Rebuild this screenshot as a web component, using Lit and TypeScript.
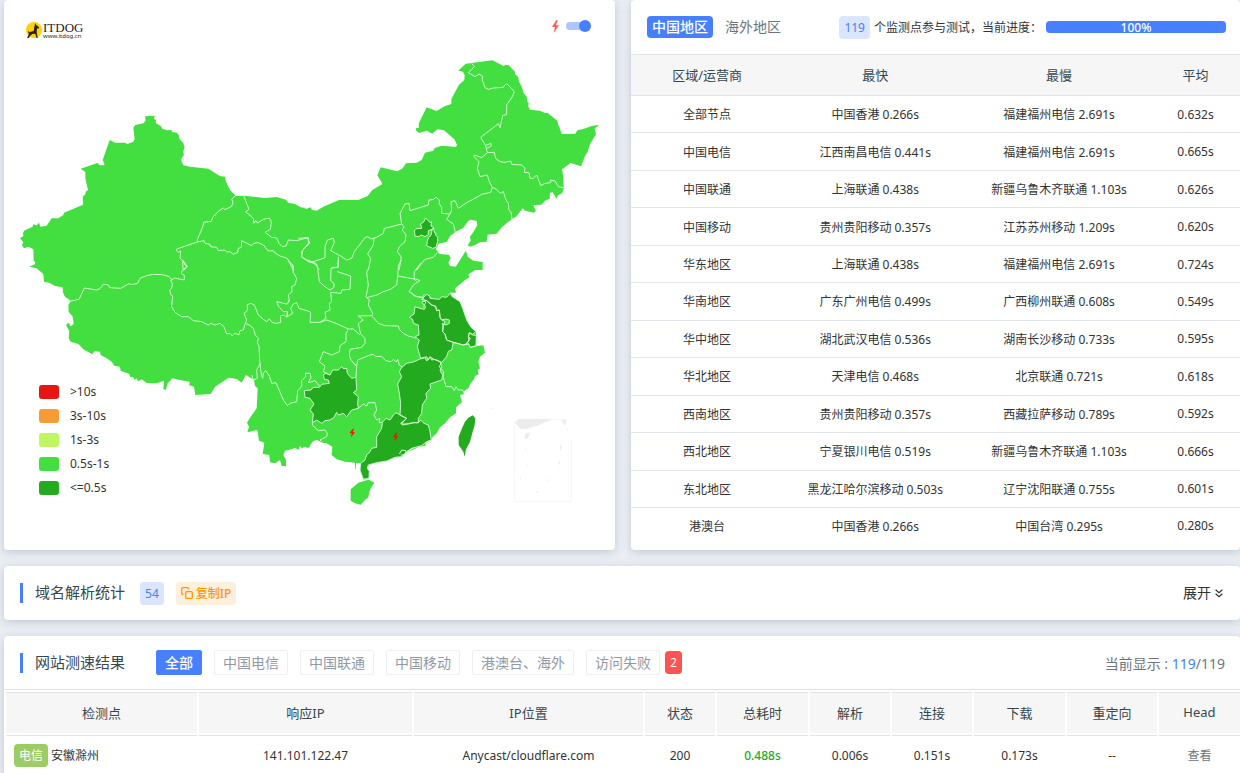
import { LitElement, html, svg, css } from "lit";
import { customElement, property, state } from "lit/decorators.js";
import { classMap } from "lit/directives/class-map.js";

type Run = [number, number, string];

/* A line is traced as runs of points; every run has its own origin on the map sheet. */
const line = (...runs: Run[]) =>
  "M" +
  runs
    .map(([dx, dy, pts]) =>
      pts
        .trim()
        .split(/\s+/)
        .map((p) => {
          const [x, y] = p.split(",").map(Number);
          return `${x + dx} ${y + dy}`;
        })
        .join("L")
    )
    .join("L");

const area = (...runs: Run[]) => line(...runs) + "Z";
const W = (p: string): Run => [0, 0, p];
const SW = (p: string): Run => [0, 780, p];
const NE = (p: string): Run => [900, 0, p];
const S = (p: string): Run => [690, 780, p];
const E = (p: string): Run => [1200, 720, p];

const MAINLAND = area(
  W(`60,715 70,708 69,700 72,692 98,680 99,673 110,676 117,668 121,680 140,677 155,655 175,655 190,645 192,638 249,614 248,590
  256,583 257,575 264,570 256,535 256,516 242,506 292,489 300,496 314,495 308,480 329,420 345,428 375,428 382,432 400,425
  404,416 400,383 406,375 430,370 437,362 435,349 464,347 462,357 468,360 467,369 482,378 487,386 500,391 514,390 516,396
  530,398 536,404 538,416 550,430 554,442 549,456 552,464 544,476 545,486 550,496 570,500 625,506 659,528 675,530 677,542
  690,570 705,585 706,588 733,587 795,594 830,591 858,599 865,608 885,612 905,623 918,624`),
  NE(`0,622 20,626 33,622 35,629 50,632 70,620 117,600 175,600 203,588 217,570 246,553 245,547 232,526 242,502 292,514 308,505
  318,490 350,488 365,480 375,458 400,452 404,444 425,437 445,439 468,441 471,434 463,418 432,391 412,388 397,401 380,392
  357,399 347,390 349,384 356,384 357,368 380,322 410,333 435,318 454,312 454,298 462,282 477,254 493,240 494,226 489,215
  475,212 497,191 577,181 612,199 615,194 627,196 633,203 645,215 645,222 655,232 657,244 668,268 670,278 680,290 682,306
  686,308 685,320 690,329 720,332 735,339 742,338 772,362 775,375 780,387 785,402 826,401 832,391 850,387 875,378 897,374
  884,386 888,403 870,432 863,455 855,468 843,499 812,489 786,508 790,530 791,563 787,578 772,588 770,597 758,577 750,578
  749,596 735,602 724,614 700,615 707,632 702,638 675,632 668,625 648,650 636,657 605,682 590,701 563,704 560,725 540,727
  525,735 510,740 503,736 512,722 510,710 520,696 532,676 530,663 513,659 505,662 490,683 465,697 450,708 440,726 420,730
  415,733 408,748 418,762 446,764 452,775 445,788 450,798 467,800 480,780 498,752 503,770 520,782 548,786`),
  E(`248,90 225,90 218,95 205,103 208,112 195,120 180,133 165,145 168,158 152,158 154,168 180,185 188,205 200,240 213,262
  228,275 228,318 250,316 255,338 240,350 235,365 240,385 233,390 236,403 225,408 222,418 212,430 205,445 190,455 192,462
  180,465 186,486 168,502 168,520 150,532 135,550 120,562 110,580 97,592 95,600 80,605 75,618 45,622 25,635`),
  S(`575,557 545,565 530,575 515,590 495,592 470,603 440,608 415,615 412,625 418,634 417,655 400,658 390,630 392,610 378,610
  377,628 375,628 375,608 345,605 320,598 305,585 307,560 290,550 275,548 262,540 250,543 240,556`),
  SW(`930,560 923,564 915,560 905,565 900,558 895,570 885,563 875,568 855,572 850,585 858,600 858,619 845,618 840,600 825,610
  810,607 808,585 788,582 793,548 777,542 772,510 742,517 747,500 741,488 752,470 770,445 773,385 765,378 762,360 738,345
  725,368 710,357 686,353 645,380 632,402 586,405 582,380 568,376 569,365 540,360 518,355 503,370 497,391 490,386 492,362
  470,370 440,369 425,358 415,364 410,355 404,360 400,352 390,350 388,342 362,332 360,320 343,317 335,305 320,295 302,285
  300,275 283,274 277,283 250,268 235,252 212,245 206,235 208,212 198,195 205,188 212,199 221,192 218,170 206,155 205,135
  213,123 195,110 189,98 188,82 165,78 147,68 132,65 130,42 110,25 88,20 105,12`),
  W(`112,805 90,800 104,795 106,787 101,782 100,748 85,740 72,745 66,735 70,727`)
);

const HAINAN = area(S("362,688 385,668 400,664 412,660 418,660 433,668 425,680 418,695 415,712 405,720 392,734 375,730 362,722"));

const DARK = [
  area(NE("343,692 350,686 365,685 362,672 372,665 376,654 385,662 390,668 395,665 393,678 401,682 396,688 385,692 385,704 375,710 365,705 355,710 345,708")),
  area(NE("401,684 403,698 408,700 407,706 413,712 413,724 408,742 398,745 380,737 382,724 386,712 393,706 396,690")),
  area(S(`223,392 243,390 250,382 268,382 275,373 298,370 295,360 283,358 280,345 288,340 300,345 308,330 325,330 335,320
  340,326 350,325 352,340 365,355 378,352 380,390 370,398 385,410 383,430 385,445 365,450 350,470 340,460 325,465 320,457
  312,472 300,480 285,482 275,490 260,480 247,488 250,462 240,450 252,432 240,415 225,412`)),
  area(S(`515,322 530,310 550,306 570,297 585,293 590,303 600,291 612,298 630,305 635,320 630,332 638,345 635,360 600,372 602,385
  588,400 590,415 577,435 575,460 565,475 565,488 550,488 530,492 518,495 512,490 530,475 510,465 512,430 508,400 503,372
  515,350 508,335`)),
  area(S(`457,487 468,475 480,480 490,465 498,458 510,465 530,475 514,492 535,492 550,488 565,488 572,480 582,490 595,495 600,515
  604,540 590,545 575,557 545,565 530,575 515,590 495,592 470,603 440,608 415,615 412,625 418,634 417,655 400,658 390,630
  392,610 405,600 410,585 420,575 425,565 440,562 440,530 455,505`)),
  area(E(`45,200 60,205 73,208 77,200 65,186 80,182 95,195 107,199 110,212 118,210 120,232 125,240 135,245 128,262 128,275 135,282
  140,300 160,307 155,330 145,334 140,350 125,367 105,358 95,360 90,350 85,360 80,350 62,355 52,320 58,300 45,290 57,285
  55,255 40,250 38,238 28,232 42,222`)),
  area(E(`65,178 80,163 90,168 90,175 118,178 125,170 140,172 152,158 154,168 180,185 188,205 200,240 213,262 228,275 218,283
  208,278 205,292 207,300 198,312 190,315 160,307 140,300 135,282 128,275 130,262 127,250 138,255 148,250 148,240 138,237
  125,240 120,232 118,210 110,212 107,199 95,195 80,182`)),
  area(E("208,278 218,285 229,286 228,318 212,322 203,308 211,295 205,290")),
];

const TAIWAN = area(S("728,466 736,475 734,495 728,515 720,545 708,568 704,590 700,575 686,555 686,530 698,500 705,485 715,473"));
const HONGKONG = line(S("508,582 515,570 528,572 526,585 512,585"));

const BORDERS = [
  line(
    W(`706,588 695,597 699,607 695,619 675,629 670,624 655,634 638,652 634,664 611,667 608,682 592,718 592,726 530,747 530,753
    536,757 542,753 540,773 550,785 555,795 562,800 549,808`),
    SW("548,0 561,18 555,28 546,32 544,40 553,46 553,60 523,54 512,62")
  ),
  line(SW(`516,60 508,50 487,44 460,43 440,47 420,55 413,70 400,73 385,72 362,85 329,83 324,74 310,73 300,86 290,90 253,84 237,118
    213,123`)),
  line(SW(`512,60 517,72 515,85 509,90 513,105 518,108 515,140 525,157 545,170 565,170 580,182 605,185 625,195 632,190 645,195
    660,190 672,200 680,222 690,220 697,228 703,220 717,224 720,212 730,210 736,190 740,180 732,160 742,152 742,134 753,130
    763,135 775,165 790,178 800,185 808,176 815,186 825,190 842,188 842,167 852,165 860,172 862,155 850,155 835,138 830,125
    850,130 862,132 868,120`)),
  line(SW("736,190 748,195 760,205 766,225 775,235 772,248 777,258 779,300 784,345 788,355 790,338 797,332 808,348 815,370 828,368 850,420 862,437 870,430 890,425 893,392 905,380 905,362 917,350 916,340 930,340")),
  line(SW("780,312 770,330 772,355 760,360 755,345")),
  line(
    W(`592,726 612,722 615,730 630,733 632,740 650,742 655,752 675,750 680,756 690,755 700,763 713,757 715,745 724,742 725,722
    755,737 760,730 775,728 790,735 805,753 820,752 825,759 840,768 862,775 868,785 880,797 880,810`),
    SW("865,2 877,15 880,38 890,55 885,75 875,80 876,95 865,105 868,120 862,132")
  ),
  line(SW("862,155 862,170 878,160 872,145 880,132 890,128 897,145 930,155"), S("242,160 240,187 270,187")),
  line(
    W(`731,588 747,628 737,635 760,655 762,670 768,662 772,669 790,658 808,654 814,665 811,688 795,697 815,712 830,714 837,730
    847,740 858,738 865,720 890,722 905,718 923,713 929,730 908,750 905,770 928,787 940,788`)
  ),
  line(
    NE(`-5,715 25,713 25,730 5,755 5,772 35,787 75,773 75,740 82,720 100,715 103,728 92,752 120,767 140,780 155,775 163,755
    195,713 203,710 215,717 230,712 250,700 253,685 275,680 305,672 300,640 315,612 327,610 330,632 362,622 385,615 387,600
    400,598 408,592 418,600 418,612 425,622 425,640 450,642 455,630 453,605 465,602 475,625 500,608 530,592 545,583 572,577
    577,562 568,545 562,525 540,530 532,505 537,485 522,470 523,465 545,473 562,458 556,435 542,412 595,371 600,383 608,347
    620,343 620,315 637,290 643,275 622,252 615,254 610,262 580,264 565,268 555,263 547,240 547,228 537,222 525,230 505,218
    523,200 515,190`)
  ),
  line(NE("556,437 573,430 574,438 560,445")),
  line(NE("562,458 583,457 587,475 600,485 615,487 632,483 635,493 665,495 675,505 673,517 687,518 690,535 700,535 710,525 722,557 735,550 752,548 752,540 765,543 775,560 790,563")),
  line(NE("577,562 590,568 600,580 610,575 618,600 625,610 627,630 633,637 636,657")),
  line(NE("450,642 440,658 460,672 466,697")),
  line(NE("222,712 220,735 203,762 212,775 205,810"), S("412,30 410,40 415,75 408,110 418,120 415,135 428,160 425,167 385,168 400,180 385,190 392,222 405,235 405,250 395,262 360,268 358,285 362,298 380,320")),
  line(NE("305,672 312,680 307,690 318,705 315,725 298,740 292,755 303,770 303,782 297,795 297,810"), S("513,0 505,20 503,50 500,75 482,88 460,95 440,105 410,113")),
  line(NE("412,758 400,772 375,778 365,790 350,810"), S("572,10 553,35 552,55 570,62 550,75 537,95 560,110 578,112 583,103")),
  line(S("503,48 525,52 552,57 560,64")),
  line(S("540,95 553,108 578,113 587,128 580,142")),
  line(S("425,167 445,190 465,197 505,198 508,208 520,220 535,228 550,232 557,235")),
  line(S("380,320 383,300 420,285 430,283 437,290 455,289 467,302 483,305 490,298 498,306 503,298 508,315 518,322")),
  line(S("235,0 260,12 265,40 268,65 285,80 300,90 312,82 312,70 302,62 303,25 322,22 325,0")),
  line(S("322,35 362,48 360,88 335,90 333,100 302,97 305,125 298,130 300,150 285,157 288,175 270,187 290,180 318,190 355,207 370,207 390,225")),
  line(NE("115,770 115,802 95,802")),
  line(NE("35,787 50,795 57,810")),
  line(S("355,207 348,220 348,245 330,257 328,275 305,285 280,275 268,305 285,318 280,335 300,345")),
  line(S("362,298 380,320 378,352")),
  line(S("225,340 240,340 243,352 235,368 255,362 270,380")),
  line(S("385,445 400,432 410,438 415,428 435,428 440,450 432,465 440,480 450,475 447,488 457,487")),
  line(S("247,488 248,497 265,512 285,510 292,520 290,530 270,540 278,548")),
  line(E("160,307 190,315 205,312 212,322 228,318")),
  line(E("125,367 118,380 130,395 130,412 138,440 155,440 163,452 168,440 175,450 188,450 192,458")),
];

const BOLT = "M5 0L0 7h3.400L2 13L8 5.200H4.500L6.500 0z";

@customElement("speed-map")
class SpeedMap extends LitElement {
  @state() private bolts = true;

  static styles = css`
    :host { display: block; position: relative; }
    .sheet { display: block; width: 100%; height: auto; }
    .land { fill: #43df40; }
    .deep { fill: #24aa1e; }
    .border { fill: none; stroke: #d0f7cf; stroke-width: 3; stroke-linejoin: round; }
    .mark { fill: #f5120c; }
    .inset { fill: none; stroke: #f6f6f6; stroke-width: 3; }
    .isle { fill: #ececec; }
    .logo { position: absolute; left: 22px; top: 22px; display: flex; gap: 1px; align-items: flex-start; color: #2b2220; text-decoration: none; }
    .dog { width: 16px; height: 16px; }
    .name { display: block; font: 13px/12px "Liberation Serif", serif; }
    .site { display: block; font-size: 6px; line-height: 4px; }
    .switch { position: absolute; right: 24px; top: 19px; display: flex; align-items: center; gap: 7px; }
    .flash { width: 7px; height: 13px; fill: #ff5b5b; }
    .toggle { appearance: none; width: 25px; height: 14px; margin: 0; position: relative; cursor: pointer; }
    .toggle::before { content: ""; position: absolute; left: 0; right: 2px; top: 3px; height: 8px; border-radius: 4px; background: #cfd4da; }
    .toggle::after { content: ""; position: absolute; left: 0; top: 1px; width: 12px; height: 12px; border-radius: 50%; background: #98a0aa; }
    .toggle:checked::before { background: #adc6ff; }
    .toggle:checked::after { left: 13px; background: #4680ff; }
    .legend { position: absolute; left: 35px; bottom: 51px; margin: 0; padding: 0; list-style: none; }
    .level { display: flex; align-items: center; gap: 11px; height: 24px; font-size: 12px; color: #333; }
    .level i { width: 20px; height: 14px; border-radius: 3px; margin-top: 2px; }
    .c1 { background: #e81612; } .c2 { background: #f89a35; } .c3 { background: #bff762; } .c4 { background: #43df40; } .c5 { background: #24aa1e; }
  `;

  render() {
    const levels = [">10s", "3s-10s", "1s-3s", "0.5s-1s", "<=0.5s"];
    return html`
      <svg class="sheet" viewBox="12 0 1833 1650" role="img" aria-label="中国地图">
        <path class="land" d=${MAINLAND}></path>
        <path class="land" d=${HAINAN}></path>
        <path class="deep" d=${TAIWAN}></path>
        ${DARK.map((d) => svg`<path class="deep" d=${d}></path>`)}
        ${DARK.map((d) => svg`<path class="border" d=${d}></path>`)}
        ${BORDERS.map((d) => svg`<path class="border" d=${d}></path>`)}
        <path class="border" d=${HONGKONG}></path>
        ${this.bolts
          ? svg`<path class="mark" d=${BOLT} transform="translate(1048 1286) scale(2.200 2)"></path>
                <path class="mark" d=${BOLT} transform="translate(1178 1298) scale(2.200 2)"></path>`
          : ""}
        <g transform="translate(1200 720)">
          <path class="inset" d="M344 546V785H514V600M352 538H494"></path>
          <path class="isle" d="M344 548L354 538H458L410 557L380 567H362zM484 539H500L494 557zM378 580L391 577L384 594L372 597zM480 615H484V630H480zM482 658L474 672L478 674zM452 710L444 726L448 724zM386 665L378 678L380 678zM359 710L364 726L362 710zM375 622L380 638L379 626zM507 560L499 570L502 571zM406 756L415 754L412 759zM275 508L280 500V508z"></path>
        </g>
      </svg>
      <a class="logo" href="#">
        <svg class="dog" viewBox="0 0 48 48" aria-hidden="true">
          <circle cx="24" cy="24" r="24" fill="#fdd20a"></circle>
          <path fill="#2b2012" d="M28 3L31 9L39 16L38 20L33 19L32 30L34 43L36 47H31L28 35L19 36L12 42L8 48H3L8 38L8 33L5 27L11 30L23 27L25 14z"></path>
        </svg>
        <span><span class="name">ITDOG</span><span class="site">www.itdog.cn</span></span>
      </a>
      <label class="switch" aria-label="闪电标记">
        <svg class="flash" viewBox="0 0 8 13" preserveAspectRatio="none" aria-hidden="true"><path d=${BOLT}></path></svg>
        <input class="toggle" type="checkbox" .checked=${this.bolts} @change=${() => (this.bolts = !this.bolts)} />
      </label>
      <ul class="legend">
        ${levels.map((t, i) => html`<li class="level"><i class="c${i + 1}"></i>${t}</li>`)}
      </ul>
    `;
  }
}

const REGIONS = [
  ["全部节点", "中国香港 0.266s", "福建福州电信 2.691s", "0.632s"],
  ["中国电信", "江西南昌电信 0.441s", "福建福州电信 2.691s", "0.665s"],
  ["中国联通", "上海联通 0.438s", "新疆乌鲁木齐联通 1.103s", "0.626s"],
  ["中国移动", "贵州贵阳移动 0.357s", "江苏苏州移动 1.209s", "0.620s"],
  ["华东地区", "上海联通 0.438s", "福建福州电信 2.691s", "0.724s"],
  ["华南地区", "广东广州电信 0.499s", "广西柳州联通 0.608s", "0.549s"],
  ["华中地区", "湖北武汉电信 0.536s", "湖南长沙移动 0.733s", "0.595s"],
  ["华北地区", "天津电信 0.468s", "北京联通 0.721s", "0.618s"],
  ["西南地区", "贵州贵阳移动 0.357s", "西藏拉萨移动 0.789s", "0.592s"],
  ["西北地区", "宁夏银川电信 0.519s", "新疆乌鲁木齐联通 1.103s", "0.666s"],
  ["东北地区", "黑龙江哈尔滨移动 0.503s", "辽宁沈阳联通 0.755s", "0.601s"],
  ["港澳台", "中国香港 0.266s", "中国台湾 0.295s", "0.280s"],
];

@customElement("region-table")
class RegionTable extends LitElement {
  @property({ type: Number }) progress = 100;

  static styles = css`
    :host { display: flex; flex-direction: column; }
    .head { display: flex; align-items: center; height: 54px; padding: 0 14px 0 16px; }
    .tab { font: inherit; font-size: 14px; line-height: 22px; border: 0; border-radius: 4px; padding: 0 5px; background: none; color: #6c757d; white-space: nowrap; cursor: pointer; }
    .tab + .tab { margin-left: 7px; }
    .tab.on { background: #4680ff; color: #fff; font-weight: 500; }
    .status { margin-left: auto; display: flex; align-items: center; gap: 4px; font-size: 12px; color: #333; white-space: nowrap; }
    .count { line-height: 23px; padding: 0 5px; border-radius: 4px; background: #dae6ff; color: #4680ff; }
    .track { width: 180px; border-radius: 4px; background: #e9ecef; }
    .fill { height: 12px; display: grid; place-content: center; border-radius: 4px; background: #4680ff; color: #fff; font-weight: 500; }
    .grid { width: 100%; height: 490px; border-collapse: collapse; table-layout: fixed; text-align: center; }
    .grid th { height: 38px; padding: 0 0 2px; border: 1px solid #dee5ec; border-width: 1px 0; background: #f6f6f7; font-size: 13px; font-weight: 400; color: #37474f; }
    .grid td { padding: 0; border-top: 1px solid #dee5ec; font-size: 12px; color: #333; white-space: nowrap; }
    .a { width: 25%; } .b { width: 30.2%; } .d { width: 14.6%; }
  `;

  render() {
    return html`
      <div class="head">
        <button class="tab on">中国地区</button>
        <button class="tab">海外地区</button>
        <div class="status">
          <span class="count">119</span><span>个监测点参与测试，当前进度：</span>
          <div class="track" role="progressbar" aria-valuenow=${this.progress}>
            <div class="fill" style="width:${this.progress}%">${this.progress}%</div>
          </div>
        </div>
      </div>
      <table class="grid">
        <colgroup><col class="a" /><col class="b" /><col class="b" /><col class="d" /></colgroup>
        <thead><tr><th>区域/运营商</th><th>最快</th><th>最慢</th><th>平均</th></tr></thead>
        <tbody>${REGIONS.map((r) => html`<tr>${r.map((c) => html`<td>${c}</td>`)}</tr>`)}</tbody>
      </table>
    `;
  }
}

@customElement("result-list")
class ResultList extends LitElement {
  @state() private active = 0;

  static styles = css`
    :host { display: block; overflow: hidden; }
    .head { display: flex; align-items: center; height: 53px; padding: 0 15px 0 16px; border-bottom: 1px solid #dee2e6; }
    .title { margin: 0 31px 0 0; padding-left: 12px; border-left: 3px solid #4680ff; font-size: 15px; line-height: 18px; padding-bottom: 2px; font-weight: 400; color: #37474f; white-space: nowrap; }
    .filters { display: flex; gap: 12px; }
    .filter { font: inherit; font-size: 14px; line-height: 23px; padding: 0 8px; border: 1px solid #edeff1; border-radius: 2px; background: #fff; color: #919aa3; white-space: nowrap; cursor: pointer; }
    .filter.on { background: #4680ff; border-color: #4680ff; color: #fff; font-weight: 500; }
    .fails { margin-left: 5px; padding: 0 5px; border-radius: 4px; background: #ff5252; color: #fff; font-size: 12px; line-height: 23px; }
    .shown { margin-left: auto; font-size: 14px; color: #6c757d; white-space: nowrap; }
    .shown b { font-weight: 400; color: #4680ff; }
    .rows { width: calc(100% + 2px); border-spacing: 2px; table-layout: fixed; text-align: center; }
    .rows th { height: 38px; padding: 0 0 2px; border-top: 1px solid #dee5ec; background: #f6f6f7; font-size: 13px; font-weight: 400; color: #37474f; }
    .rows td { height: 38px; padding: 0; border-top: 1px solid #dee5ec; font-size: 12px; color: #333; white-space: nowrap; }
    .rows .node { text-align: left; padding-left: 8px; }
    .isp { display: inline-block; margin-right: 3px; padding: 0 5px; border-radius: 4px; background: #9ccc65; color: #fff; line-height: 23px; }
    .rows .fast { color: #24aa1e; font-weight: 500; }
    .view { color: #6c757d; text-decoration: none; }
    .w1 { width: 191px; } .w2 { width: 213px; } .w3 { width: 229px; } .w4 { width: 70px; } .w5 { width: 91px; } .w6 { width: 80px; } .w7 { width: 90px; } .w8 { width: 81px; }
  `;

  render() {
    const filters = ["全部", "中国电信", "中国联通", "中国移动", "港澳台、海外", "访问失败"];
    const cols: [string, string][] = [
      ["检测点", "w1"], ["响应IP", "w2"], ["IP位置", "w3"], ["状态", "w4"], ["总耗时", "w5"],
      ["解析", "w6"], ["连接", "w6"], ["下载", "w5"], ["重定向", "w7"], ["Head", "w8"],
    ];
    return html`
      <div class="head">
        <h2 class="title">网站测速结果</h2>
        <div class="filters">
          ${filters.map(
            (f, i) => html`<button class=${classMap({ filter: true, on: i === this.active })} @click=${() => (this.active = i)}>${f}</button>`
          )}
        </div>
        <span class="fails">2</span>
        <span class="shown">当前显示 : <b>119</b>/119</span>
      </div>
      <table class="rows">
        <colgroup>${cols.map(([, w]) => html`<col class=${w} />`)}</colgroup>
        <thead><tr>${cols.map(([t]) => html`<th>${t}</th>`)}</tr></thead>
        <tbody>
          <tr>
            <td class="node"><span class="isp">电信</span>安徽滁州</td>
            <td>141.101.122.47</td><td>Anycast/cloudflare.com</td><td>200</td>
            <td class="fast">0.488s</td><td>0.006s</td><td>0.151s</td><td>0.173s</td><td>--</td>
            <td><a class="view" href="#">查看</a></td>
          </tr>
        </tbody>
      </table>
    `;
  }
}

@customElement("app-root")
class AppRoot extends LitElement {
  static styles = css`
    :host { display: block; box-sizing: border-box; height: 100vh; overflow: hidden; padding-left: 4px; background: #ebeff4; font-family: "Noto Sans", "Noto Sans CJK SC", sans-serif; }
    .page { display: flex; flex-direction: column; gap: 16px; }
    .top { display: grid; grid-template-columns: minmax(0, 611fr) minmax(0, 609fr); gap: 16px; }
    .card { background: #fff; border-radius: 4px; box-shadow: 0 2px 10px rgba(60, 80, 115, 0.25); }
    .stats { display: flex; align-items: center; height: 54px; padding: 0 17px 0 16px; }
    .title { margin: 0 15px 0 0; padding-left: 12px; border-left: 3px solid #4680ff; font-size: 15px; line-height: 18px; padding-bottom: 2px; font-weight: 400; color: #37474f; }
    .count { line-height: 23px; padding: 0 5px; border-radius: 4px; background: #dae6ff; color: #4680ff; font-size: 12px; }
    .copy { display: flex; align-items: center; gap: 3px; margin-left: 12px; padding: 0 5px; border: 0; border-radius: 4px; background: #fff0dc; color: #ff9800; font: inherit; font-size: 12px; line-height: 23px; font-weight: 500; cursor: pointer; }
    .copy svg { width: 12px; height: 12px; fill: none; stroke: currentColor; stroke-width: 1.3; }
    .expand { display: flex; align-items: center; gap: 4px; margin-left: auto; padding: 0; border: 0; background: none; color: #333; font: inherit; font-size: 14px; line-height: 20px; cursor: pointer; }
    .expand svg { width: 8px; height: 9px; fill: none; stroke: currentColor; stroke-width: 1.2; }
  `;

  render() {
    return html`
      <main class="page">
        <div class="top">
          <speed-map class="card"></speed-map>
          <region-table class="card"></region-table>
        </div>
        <section class="card stats">
          <h2 class="title">域名解析统计</h2>
          <span class="count">54</span>
          <button class="copy">
            <svg viewBox="0 0 12 12" aria-hidden="true"><rect x="4.700" y="4.700" width="6.600" height="6.600" rx="1"></rect><path d="M2.500 7.500H1.700a1 1 0 0 1-1-1V1.700a1 1 0 0 1 1-1H6.500a1 1 0 0 1 1 1V2.500"></path></svg>
            <span>复制IP</span>
          </button>
          <button class="expand">
            <span>展开</span>
            <svg viewBox="0 0 8 9" aria-hidden="true"><path d="M.6.8L4 3.800L7.400.8M.6 4.800L4 7.800L7.400 4.800"></path></svg>
          </button>
        </section>
        <result-list class="card"></result-list>
      </main>
    `;
  }
}
